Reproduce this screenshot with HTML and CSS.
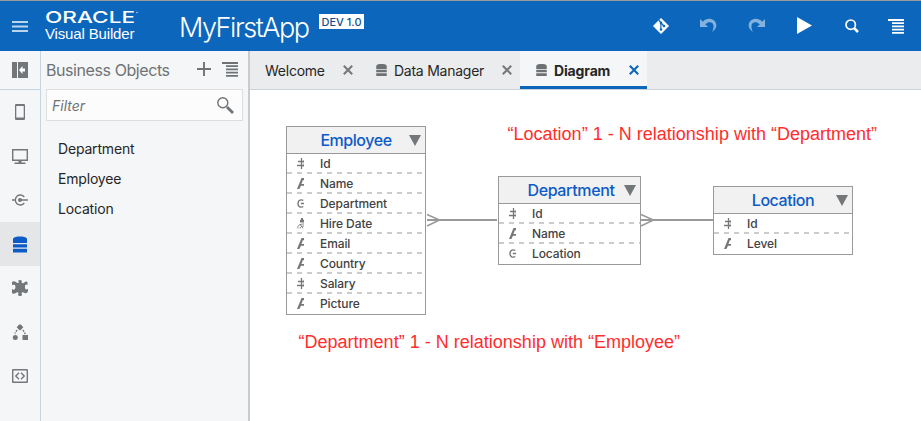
FILE: index.html
```html
<!DOCTYPE html>
<html lang="en">
<head>
<meta charset="utf-8">
<title>MyFirstApp</title>
<link rel="stylesheet" href="styles.css">
</head>
<body>
<svg class="defs" width="0" height="0">
  <symbol id="db" viewBox="0 0 14 16"><path d="M0 2.200C1 .4 4 0 7 0s6 .4 7 2.200V6.500H0zM0 7.800h14v3.200H0zM0 12.300h14V16H0z"/></symbol>
  <symbol id="close" viewBox="0 0 10 10"><path d="M.8.8l8.400 8.400M9.200.8L.8 9.200" fill="none" stroke="currentColor" stroke-width="2.100"/></symbol>
  <symbol id="menu" viewBox="0 0 16 15"><path d="M0 0h16v2H0zM4 3.300h12v1.700H4zM4 6.500h12v1.700H4zM4 9.700h12v1.700H4zM4 13h12v1.700H4z"/></symbol>
  <symbol id="num" viewBox="0 0 7 11"><path d="M4.500 0v11M1 3.500h6M0 7.500h7" fill="none" stroke="currentColor" stroke-width="1.300"/><path d="M6.300 2v7" fill="none" stroke="currentColor" stroke-width=".4"/></symbol>
  <symbol id="str" viewBox="0 0 7 11"><path d="M0 11L4.500 0H7v2.300H5.800L4.500 6H7v1.700H4L2.400 11z"/></symbol>
  <symbol id="ref" viewBox="0 0 7 11"><path d="M6.300 2.300C2.500.9 1 3.300 1 5.500s1.500 4.600 5.300 3.200M3.800 5.500H7" fill="none" stroke="currentColor" stroke-width="1.400"/></symbol>
  <symbol id="date" viewBox="0 0 7 11"><path d="M4 0h2v1.500l1 .5v2.500H3V2l1-.5z"/><path d="M.8 10.500c-.4-3 2-4.500 6.200-4.500M3 10.500c0-1.500 2-2.500 4-2.500M3 6l3 4.500" fill="none" stroke="currentColor" stroke-width=".9"/></symbol>
</svg>
<header class="topbar">
  <svg class="burger" width="16" height="12" viewBox="0 0 16 12"><path d="M0 1h16M0 5.500h16M0 10h16"/></svg>
  <div class="brand">
    <svg class="logo" width="96" height="20" viewBox="0 0 96 20"><text class="oracle" x="0" y="16" textLength="90" lengthAdjust="spacingAndGlyphs">ORACLE</text><circle cx="92" cy="5.500" r=".8" fill="#b9d5ee"/></svg>
    <span class="vb">Visual Builder</span>
  </div>
  <h1>MyFirstApp</h1>
  <span class="version">DEV 1.0</span>
  <nav class="actions">
    <svg width="16" height="16" viewBox="0 0 16 16"><path d="M8 .5L15.500 8 8 15.500.5 8z" fill="#fff" stroke="#fff" stroke-linejoin="round"/><path d="M5.700 2l2.200 2.500v7.500M8 4.800l3 3.200" fill="none" stroke="#0c66bb" stroke-width="1.200"/><circle cx="8" cy="4.900" r="1.300" fill="#0c66bb"/><circle cx="8" cy="11.500" r="1.300" fill="#0c66bb"/><circle cx="11" cy="8" r="1.300" fill="#0c66bb"/></svg>
    <svg class="dim" width="17" height="15" viewBox="0 0 17 15"><path d="M0 1v8h8L5.200 6.300C9 2.700 14 4 13.500 9c-.1 2-.6 3.500-1.500 5 3-2 4.700-4.500 4.300-7.500C15.500 1 8-1.700 2.800 3.700z"/></svg>
    <svg class="dim" width="17" height="15" viewBox="0 0 17 15"><path transform="matrix(-1 0 0 1 17 0)" d="M0 1v8h8L5.200 6.300C9 2.700 14 4 13.500 9c-.1 2-.6 3.500-1.500 5 3-2 4.700-4.500 4.300-7.500C15.500 1 8-1.700 2.800 3.700z"/></svg>
    <svg width="15" height="17" viewBox="0 0 15 17"><path d="M0 0l15 8.500L0 17z"/></svg>
    <svg class="find" width="14" height="14" viewBox="0 0 14 14"><g fill="none" stroke="#fff"><circle cx="5.700" cy="5.700" r="4.700" stroke-width="1.700"/><path d="M9 9l4 4" stroke-width="2.500"/></g></svg>
    <svg class="opts" width="16" height="15"><use href="#menu"/></svg>
  </nav>
</header>
<div class="body">
  <nav class="rail">
    <div class="rail-item collapse"><svg width="16" height="16" viewBox="0 0 16 16"><path d="M0 0h5v16H0zM6 0h10v16H6z"/><path d="M7 8l3.500-4v2.500H13v3h-2.500V12z" fill="#fff"/></svg></div>
    <div class="rail-item"><svg width="10" height="16" viewBox="0 0 10 16"><path fill-rule="evenodd" d="M1 0h8q1 0 1 1v14q0 1-1 1H1q-1 0-1-1V1q0-1 1-1zM1.300 2v11.500h7.400V2z"/></svg></div>
    <div class="rail-item"><svg width="16" height="15" viewBox="0 0 16 15"><path d="M.7.7h14.600v10.600H.7z" fill="none" stroke="currentColor" stroke-width="1.400"/><path d="M6.500 12h3v1.500h4V15h-11v-1.500h4z"/></svg></div>
    <div class="rail-item"><svg width="16" height="12" viewBox="0 0 16 12"><g fill="none" stroke="currentColor" stroke-width="1.400"><path d="M0 6h3M12.300 3A5 5 0 1 0 12.300 9M8 6h8"/></g><circle cx="8" cy="6" r="2"/></svg></div>
    <div class="rail-item selected"><svg width="14" height="17"><use href="#db" width="14" height="17"/></svg></div>
    <div class="rail-item"><svg width="16" height="16" viewBox="0 0 16 16"><path d="M6.800 2.400Q5.500 0 8 0t1.500 2.400q1.500 1.600 3-.2Q15.600.7 15.500 3v2q-1.500-1-2.200 0-.7 2 0 3.800.8 1.400 2.700 0v2.500q-1 2.500-3.500 1.600-2-1.500-3 .2 1.500 3-1.500 2.900-3 0-1.400-2.900Q5.500 11.600 4 13 .8 14.600 0 13V9q1.800 1.500 3 0 .8-2 0-4-1.200-.7-3 0V2.200Q1 .3 4 1.900q1.600 1.800 2.800.5z"/></svg></div>
    <div class="rail-item"><svg width="16" height="16" viewBox="0 0 16 16"><path d="M8 0l3.300 3.300L8 6.600 4.700 3.300zM10.500 11H16v5h-5.500z"/><circle cx="3.300" cy="13.500" r="2.500"/><circle cx="8" cy="3.300" r="2.400"/><path d="M5 6l-2 3.500M11 6l2.300 4" fill="none" stroke="currentColor" stroke-width="1.500" stroke-dasharray="1.800 1.200"/></svg></div>
    <div class="rail-item"><svg width="16" height="14" viewBox="0 0 16 14"><path d="M1.200.7h13.600q.5 0 .5.500v11.600q0 .5-.5.500H1.200q-.5 0-.5-.5V1.200q0-.5.500-.5zM7 3.800L3.800 7 7 10.200M9 3.800L12.200 7 9 10.200" fill="none" stroke="currentColor" stroke-width="1.400"/></svg></div>
  </nav>
  <aside class="panel">
    <div class="panel-head"><h2>Business Objects</h2>
      <svg class="plus" width="14" height="14" viewBox="0 0 14 14"><path d="M7 0v14M0 7h14" stroke="currentColor" stroke-width="1.900"/></svg>
      <svg class="list" width="16" height="15"><use href="#menu"/></svg></div>
    <div class="filter"><span>Filter</span><svg width="17" height="17" viewBox="0 0 17 17"><g fill="none" stroke="currentColor"><circle cx="5.800" cy="5.800" r="5" stroke-width="1.400"/><path d="M10 10l6 6" stroke-width="2.800"/></g></svg></div>
    <ul class="objects"><li>Department</li><li>Employee</li><li>Location</li></ul>
  </aside>
  <main>
    <div class="tabs">
      <div class="tab t1"><span>Welcome</span><svg class="x" width="10" height="10"><use href="#close"/></svg></div>
      <div class="tab t2"><svg class="dbi" width="11" height="12"><use href="#db" width="11" height="12"/></svg><span>Data Manager</span><svg class="x" width="10" height="10"><use href="#close"/></svg></div>
      <div class="tab t3"><svg class="dbi" width="11" height="12"><use href="#db" width="11" height="12"/></svg><span>Diagram</span><svg class="x" width="10" height="10"><use href="#close"/></svg></div>
    </div>
    <div class="canvas">
      <svg class="links" width="671" height="331" viewBox="250 90 671 331"><path d="M427 220h70M641 220h72" stroke-width="2"/><path d="M427 214.500l12.500 5.500-12.500 6M641 214.500l12.500 5.500-12.500 6" stroke-width="1.500"/></svg>
      <section class="entity employee">
        <h3><span>Employee</span><i></i></h3>
        <p><svg><use href="#num"/></svg><span>Id</span></p>
        <p><svg><use href="#str"/></svg><span>Name</span></p>
        <p><svg><use href="#ref"/></svg><span>Department</span></p>
        <p><svg><use href="#date"/></svg><span>Hire Date</span></p>
        <p><svg><use href="#str"/></svg><span>Email</span></p>
        <p><svg><use href="#str"/></svg><span>Country</span></p>
        <p><svg><use href="#num"/></svg><span>Salary</span></p>
        <p><svg><use href="#str"/></svg><span>Picture</span></p>
      </section>
      <section class="entity department">
        <h3><span>Department</span><i></i></h3>
        <p><svg><use href="#num"/></svg><span>Id</span></p>
        <p><svg><use href="#str"/></svg><span>Name</span></p>
        <p><svg><use href="#ref"/></svg><span>Location</span></p>
      </section>
      <section class="entity location">
        <h3><span>Location</span><i></i></h3>
        <p><svg><use href="#num"/></svg><span>Id</span></p>
        <p><svg><use href="#str"/></svg><span>Level</span></p>
      </section>
      <div class="note n1">“Location” 1 - N relationship with “Department”</div>
      <div class="note n2">“Department” 1 - N relationship with “Employee”</div>
    </div>
  </main>
</div>
</body>
</html>
```
FILE: styles.css
```css
* { box-sizing: border-box; }
body { margin: 0; width: 921px; height: 421px; overflow: hidden; font-family: Inter, "Liberation Sans", sans-serif; color: #262626; display: flex; flex-direction: column; background: #fff; }
h1, h2, h3, p, ul { margin: 0; padding: 0; font-weight: 400; }
svg { display: block; flex: none; fill: currentColor; }
.defs { position: absolute; }
.topbar { height: 51px; flex: none; background: #0c66bb; border-top: 1px solid #9a9a9a; color: #fff; display: flex; white-space: nowrap; }
.burger { margin: 20px 0 0 12px; stroke: #b9d5ee; stroke-width: 1.900; }
.brand { width: 134px; margin-left: 17px; padding-top: 6px; }
.logo { margin-bottom: -2px; overflow: visible; }
.oracle { font-family: Inter, sans-serif; font-weight: 500; font-size: 16px; }
.vb { display: block; font-family: "Liberation Sans", sans-serif; font-size: 15px; line-height: 18px; letter-spacing: -.15px; }
h1 { width: 132px; font-size: 27px; font-weight: 300; line-height: 53px; letter-spacing: -1.450px; }
.version { width: 45px; height: 15px; margin: 13px 0 0 8px; background: #fff; color: #15508d; font-size: 11px; line-height: 16px; text-align: center; font-weight: 500; }
.actions { margin-left: auto; width: 268px; height: 49px; padding-right: 17px; display: flex; align-items: center; justify-content: space-between; }
.find { margin: 0 -2px 0 2px; }
.opts { margin-top: 2px; }
.dim { color: #84b2de; }
.body { display: flex; flex: 1; min-height: 0; }
.rail { width: 41px; background: #f5f6f8; border-right: 1px solid #c4d5e2; color: #74777a; }
.rail-item { height: 44px; display: flex; align-items: center; justify-content: center; }
.collapse { height: 39px; border-bottom: 1px solid #c4d5e2; }
.selected { background: #e5e6e8; color: #0c5bc7; }
.panel { width: 209px; background: #f5f6f8; border-right: 2px solid #c9cbce; color: #6f7376; }
.panel-head { height: 38px; display: flex; align-items: center; padding: 0 10px 0 5px; }
h2 { font-size: 16px; letter-spacing: -.42px; flex: 1; white-space: nowrap; }
.plus { margin: -2px 11px 0 0; }
.list { margin-top: -1px; }
.filter { height: 32px; width: 197px; margin-left: 5px; border: 1px solid #dcdfe1; background: #fcfcfd; display: flex; align-items: center; justify-content: space-between; padding: 0 8px 0 5px; font-size: 14px; font-style: italic; }
.objects { list-style: none; padding: 13px 0 0 17px; font-size: 14px; line-height: 30px; letter-spacing: -.18px; color: #262626; }
main { width: 671px; display: flex; flex-direction: column; }
.tabs { height: 39px; background: #ebecee; border-bottom: 1px solid #cbd3da; display: flex; font-size: 14px; letter-spacing: -.25px; white-space: nowrap; }
.tab { height: 38px; display: flex; align-items: center; }
.tab .x { margin-left: auto; color: #77797b; }
.dbi { margin-right: 7px; color: #6e7173; }
.t1 { width: 113px; padding: 0 10px 0 15px; }
.t2 { width: 157px; padding: 0 8px 0 13px; }
.t3 { width: 127px; padding: 3px 8px 0 16px; background: #f5f6f8; border-bottom: 3px solid #0c66bb; font-weight: 700; letter-spacing: -.15px; }
.t3 .x { color: #0c66bb; }
.canvas { position: relative; flex: 1; }
.links { position: absolute; left: 0; top: 0; fill: none; stroke: #999; }
.entity { position: absolute; border: 1px solid #999; background: #fff; width: 140px; }
.employee { left: 36px; top: 36px; }
.department { left: 248px; top: 86px; width: 143px; }
.location { left: 463px; top: 96px; }
h3 { height: 27px; background: #f1f1f2; border-bottom: 1px solid #999; color: #0c5bc7; font-size: 16px; line-height: 27px; font-weight: 500; letter-spacing: -.45px; text-align: center; position: relative; }
.department h3 { padding-left: 3px; letter-spacing: -.36px; }
h3 i { position: absolute; right: 4px; top: 8px; border: 6px solid transparent; border-top: 11px solid #74777a; border-bottom: 0; }
.entity p { height: 20px; display: flex; align-items: center; padding: 0 0 2px 10px; font-size: 12px; font-weight: 500; letter-spacing: -.1px; color: #424242; background: repeating-linear-gradient(90deg, #ccc 0 5px, transparent 5px 10px) 0 18px / 100% 2px no-repeat; }
.entity p:last-child { background: none; }
.entity svg { width: 7px; height: 11px; margin-right: 16px; color: #777; }
.note { position: absolute; font-family: "Liberation Sans", sans-serif; font-size: 18px; line-height: 20px; letter-spacing: .01px; color: #ff2d2d; white-space: nowrap; }
.n1 { left: 257.500px; top: 34px; }
.n2 { left: 48.500px; top: 242px; }
```
